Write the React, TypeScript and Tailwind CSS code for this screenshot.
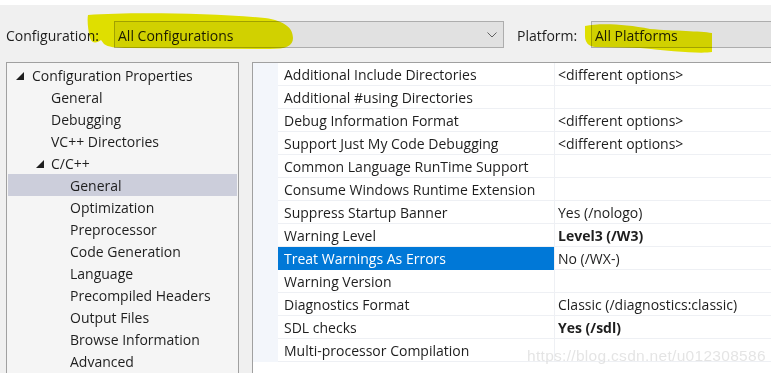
import React from 'react';

// tree on the left
const treeItems = [
  { label: 'Configuration Properties', level: 0, open: true },
  { label: 'General', level: 1 },
  { label: 'Debugging', level: 1 },
  { label: 'VC++ Directories', level: 1 },
  { label: 'C/C++', level: 1, open: true },
  { label: 'General', level: 2, selected: true },
  { label: 'Optimization', level: 2 },
  { label: 'Preprocessor', level: 2 },
  { label: 'Code Generation', level: 2 },
  { label: 'Language', level: 2 },
  { label: 'Precompiled Headers', level: 2 },
  { label: 'Output Files', level: 2 },
  { label: 'Browse Information', level: 2 },
  { label: 'Advanced', level: 2 },
];

// property grid rows
const props = [
  { name: 'Additional Include Directories', value: '<different options>' },
  { name: 'Additional #using Directories', value: '' },
  { name: 'Debug Information Format', value: '<different options>' },
  { name: 'Support Just My Code Debugging', value: '<different options>' },
  { name: 'Common Language RunTime Support', value: '' },
  { name: 'Consume Windows Runtime Extension', value: '' },
  { name: 'Suppress Startup Banner', value: 'Yes (/nologo)' },
  { name: 'Warning Level', value: 'Level3 (/W3)', bold: true },
  { name: 'Treat Warnings As Errors', value: 'No (/WX-)', selected: true },
  { name: 'Warning Version', value: '' },
  { name: 'Diagnostics Format', value: 'Classic (/diagnostics:classic)' },
  { name: 'SDL checks', value: 'Yes (/sdl)', bold: true },
  { name: 'Multi-processor Compilation', value: '' },
];

const indent = ['pl-[24px]', 'pl-[43px]', 'pl-[62px]'];
const arrowPos = ['left-[8px]', 'left-[28px]'];

function Expander() {
  return (
    <svg width="8" height="8" viewBox="0 0 8 8" className="block">
      <polygon points="8,0 8,8 0,8" fill="#1e1e1e" />
    </svg>
  );
}

function Chevron() {
  return (
    <svg width="10" height="6" viewBox="0 0 10 6" className="block">
      <polyline points="0.5,0.5 5,5 9.5,0.5" fill="none" stroke="#606060" strokeWidth="1" />
    </svg>
  );
}

export default function App() {
  return (
    <div
      className="relative w-[771px] h-[373px] overflow-hidden bg-[#f0f0f0] text-[14px] text-[#1e1e1e]"
      style={{ fontFamily: '"Open Sans", "Noto Sans", sans-serif' }}
    >
      <div className="h-[5px] bg-white" />

      {/* Toolbar */}
      <div className="h-[57px] flex items-start pt-[16px] pl-[6px]">
        <span className="w-[108px] leading-[29px]">Configuration:</span>
        <div className="w-[390px] h-[27px] border border-[#adadad] bg-[#e1e1e1] flex items-center justify-between pl-[3px] pr-[6px]">
          <span className="leading-[27px] pt-[1px]">All Configurations</span>
          <Chevron />
        </div>
        <span className="ml-[13px] w-[74px] leading-[29px]">Platform:</span>
        <div className="flex-1 h-[27px] border border-r-0 border-[#adadad] bg-[#e1e1e1] flex items-center pl-[3px]">
          <span className="leading-[27px] pt-[1px]">All Platforms</span>
        </div>
      </div>

      {/* Main */}
      <div className="flex pl-[6px] h-[311px]">
        {/* Tree */}
        <div className="w-[233px] h-[330px] border border-[#a0a0a0] bg-[#f5f5f5] pt-[1px] px-[1px]">
          {treeItems.map((item, i) => (
            <div
              key={i}
              className={
                'relative h-[22px] leading-[24px] ' +
                indent[item.level] +
                (item.selected ? ' bg-[#cccedb]' : '')
              }
            >
              {item.open && (
                <span className={'absolute top-[8px] ' + arrowPos[item.level]}>
                  <Expander />
                </span>
              )}
              {item.label}
            </div>
          ))}
        </div>

        {/* Property grid */}
        <div className="ml-[13px] flex-1 border-l border-t border-[#a0a0a0] bg-white">
          {props.map((p, i) => (
            <div key={i} className="flex h-[23px]">
              <div className="w-[25px] bg-[#f3f6fb]" />
              <div
                className={
                  'w-[276px] pl-[6px] leading-[24px] border-b whitespace-nowrap ' +
                  (p.selected
                    ? 'bg-[#0078d7] text-white border-[#0078d7]'
                    : 'border-[#eef0f4]')
                }
              >
                {p.name}
              </div>
              <div
                className={
                  'flex-1 pl-[3px] leading-[24px] border-l border-b border-[#eef0f4] whitespace-nowrap ' +
                  (p.bold ? 'font-bold' : '')
                }
              >
                {p.value}
              </div>
            </div>
          ))}
        </div>
      </div>

      {/* Marker highlights drawn over the screenshot */}
      <svg
        className="absolute left-0 top-0 pointer-events-none mix-blend-multiply"
        width="771"
        height="373"
        viewBox="0 0 771 373"
      >
        <path
          d="M88,15 C130,12 210,13 265,18 C285,21 293,28 293,38 C293,46 286,49 270,49 L130,48 C115,48 108,47 104,44 L101,40 C97,43 92,44 90,38 C88,30 87,20 88,15 Z"
          fill="#eded00"
        />
        <path
          d="M585,26 C600,23 625,24 650,29 C675,31 700,31 712,33 L712,52 C700,54 670,51 640,48 L595,47 C588,46 585,42 585,36 Z"
          fill="#eded00"
        />
      </svg>

      {/* Watermark */}
      <div
        className="absolute left-[527px] top-[344px] text-[15.5px] tracking-[0.3px] text-[#dcdcdc] opacity-75 pointer-events-none whitespace-nowrap"
        style={{ fontFamily: '"Liberation Sans", Arial, sans-serif' }}
      >
        https://blog.csdn.net/u012308586
      </div>
    </div>
  );
}
